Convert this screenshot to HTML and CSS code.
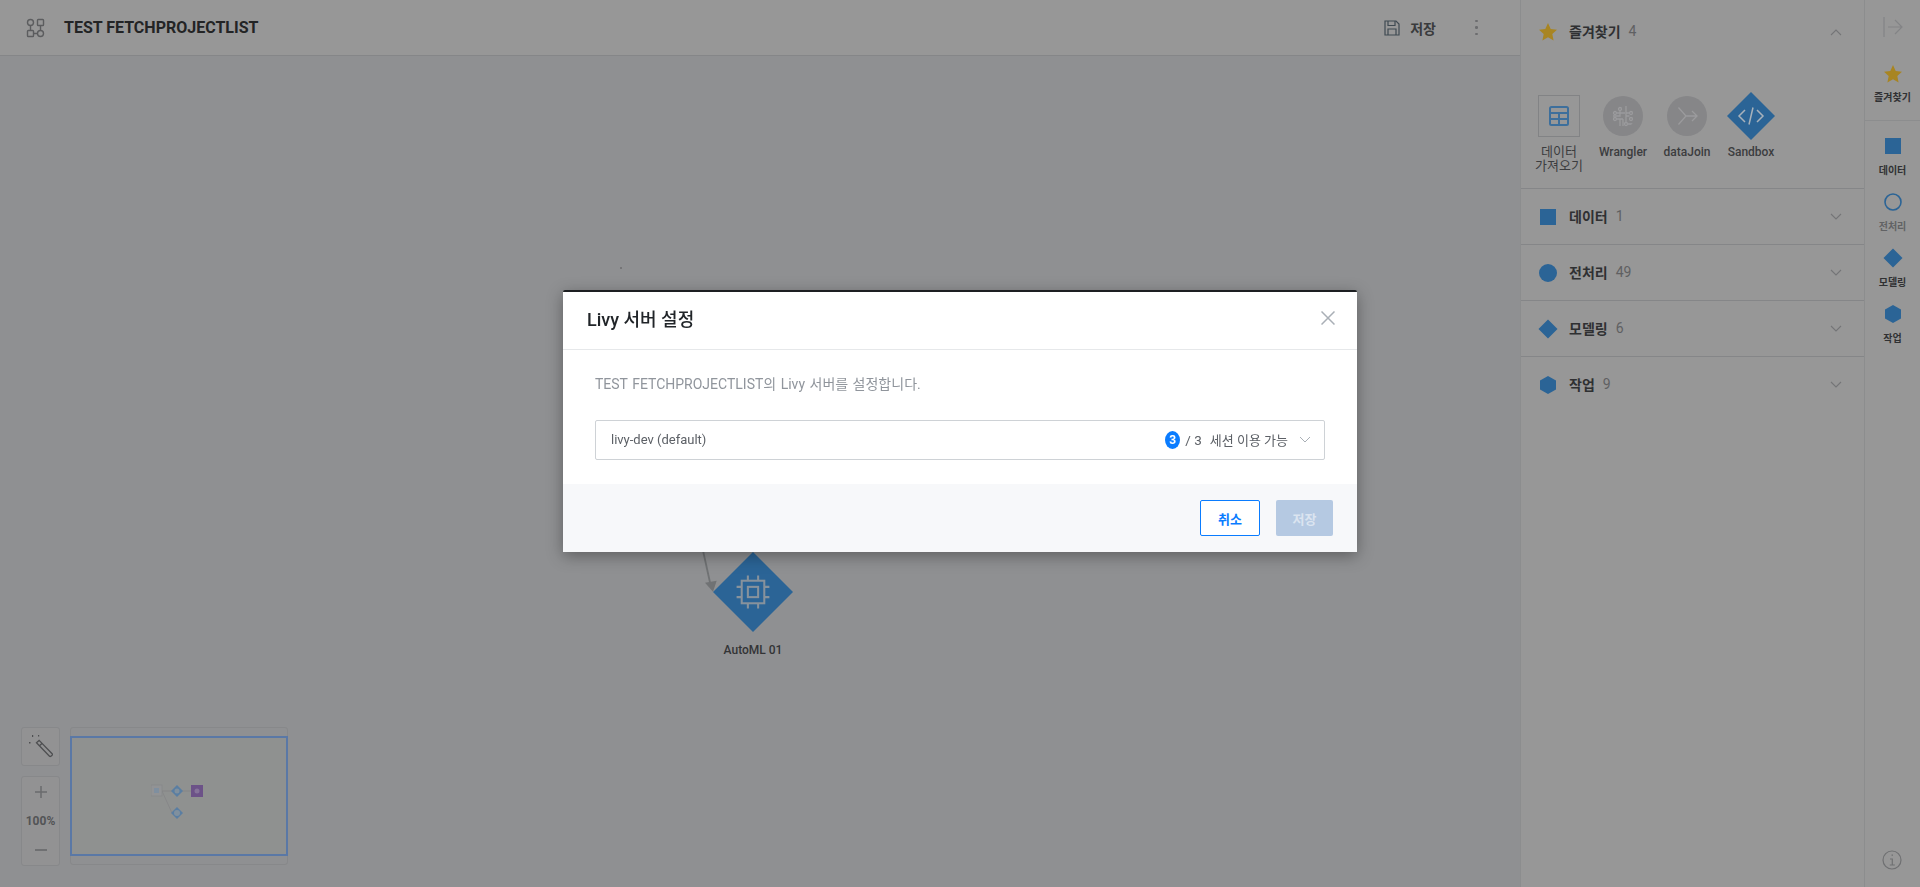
FILE: index.html
```html
<!DOCTYPE html>
<html lang="ko">
<head>
<meta charset="utf-8">
<title>Livy 서버 설정</title>
<link rel="stylesheet" href="styles.css">
</head>
<body>
<div class="app">
  <main class="main">
    <header class="topbar">
      <svg class="flow-icon" viewBox="0 0 20 20" width="20" height="20"><circle cx="4.500" cy="4.500" r="3"/><rect x="11.500" y="1.500" width="6" height="6" rx=".8"/><rect x="1.500" y="12.500" width="6" height="6" rx=".8"/><circle cx="14.500" cy="15.500" r="3"/><path d="M4.500 7.500v5M14.500 7.500v5M7.500 15.500h4"/></svg>
      <h1 class="project-title">TEST FETCHPROJECTLIST</h1>
      <button class="save-link">
        <svg class="save-icon" viewBox="0 0 16 16" width="16" height="16"><path d="M1 1h11l3 3v11H1z"/><path d="M4 1v4.500h7V1M4 15v-6h8v6"/></svg>
        <span>저장</span>
      </button>
      <span class="kebab"><i></i><i></i><i></i></span>
    </header>
    <section class="canvas">
      <span class="stray-dot"></span>
      <svg class="edge" viewBox="0 0 30 70" width="30" height="70"><path d="M2.500 0L15 57"/><path class="edge-head" d="M9 52.700l11.700-2L17 61.700z"/></svg>
      <div class="node">
        <svg viewBox="0 0 78 78" width="80" height="80"><path class="node-shape" d="M39 0l39 39-39 39L0 39z"/><g class="node-glyph"><rect x="28" y="28" width="22" height="22"/><rect x="34" y="34" width="10" height="10"/><path d="M34 28v-5M44 28v-5M34 50v5M44 50v5M28 34h-5M28 44h-5M50 34h5M50 44h5"/></g></svg>
        <span class="node-label">AutoML 01</span>
      </div>
      <div class="canvas-tools">
        <div class="tool-col">
          <button class="tool-btn">
            <svg class="wand" viewBox="0 0 24 24" width="24" height="24"><path d="M7.500 7.800l2.600-2.400 13 13.300c.5.600.4 1 0 1.500l-1.200 1c-.5.400-.9.400-1.400 0zM10.300 11l2.600-2.500"/><path class="spark" d="M3 0h1.200v2H3zM9 0h1.200v1.500H9zM0 7h1.500v1.500H0z"/></svg>
          </button>
          <div class="zoom-box">
            <svg class="zoom-plus" viewBox="0 0 12 12" width="12" height="12"><path d="M6 0v12M0 6h12"/></svg>
            <span class="zoom-val">100%</span>
            <span class="zoom-line"></span>
          </div>
        </div>
        <div class="minimap">
          <div class="mini-frame"></div>
          <svg class="mini-graph" viewBox="0 0 60 40" width="60" height="40"><path class="mini-edge" d="M11 7h30M11 7l10 22"/><rect class="mini-box" x="0" y="1" width="11" height="11"/><rect class="mini-in" x="3" y="4" width="5" height="5"/><path class="mini-d" d="M26 1l6 6-6 6-6-6z"/><circle class="mini-c" cx="26" cy="7" r="2.500"/><rect class="mini-p" x="40" y="1" width="12" height="12"/><circle class="mini-pc" cx="46" cy="7" r="2.500"/><path class="mini-d" d="M26 23l6 6-6 6-6-6z"/><circle class="mini-c" cx="26" cy="29" r="3"/></svg>
        </div>
      </div>
    </section>
  </main>

  <aside class="panel">
    <div class="group group-open">
      <div class="group-head">
        <svg class="g-icon" viewBox="0 0 20 20" width="20" height="20"><path class="star" d="M10 1l2.700 6 6.300.700-4.700 4.300 1.300 6.500L10 15.200l-5.600 3.300 1.300-6.500L1 7.700 7.300 7z"/></svg>
        <span class="g-name">즐겨찾기</span><span class="g-count">4</span>
        <svg class="chev" viewBox="0 0 12 7" width="12" height="7"><path d="M1 6l5-5 5 5"/></svg>
      </div>
      <div class="fav-row">
        <div class="fav">
          <span class="fav-box"><svg class="table-icon" viewBox="0 0 20 20" width="20" height="20"><rect x="1" y="1" width="18" height="18" rx="1.500"/><path d="M1 7h18M1 13h18M10 7v12"/></svg></span>
          <span class="fav-label fav-label-ko">데이터<br>가져오기</span>
        </div>
        <div class="fav">
          <span class="fav-circle"><svg class="ghost" viewBox="0 0 24 24" width="24" height="24"><circle cx="9" cy="5" r="1.500"/><circle cx="4" cy="9" r="1.500"/><circle cx="20" cy="15" r="1.500"/><circle cx="15" cy="20" r="1.500"/><circle cx="20" cy="9" r="1.500"/><circle cx="4" cy="15" r="1.500"/><path d="M9 6.500V12H2M5.500 9H14M15 2v16.500M15 12h3.500M18.500 9H15M5.500 15H12M12 15v7M9 15v7M16.500 20H22"/></svg></span>
          <span class="fav-label">Wrangler</span>
        </div>
        <div class="fav">
          <span class="fav-circle"><svg class="ghost" viewBox="0 0 24 24" width="24" height="24"><path d="M3 3l8 9-8 9M11 12h11M17 7l5 5-5 5"/></svg></span>
          <span class="fav-label">dataJoin</span>
        </div>
        <div class="fav">
          <span class="fav-diamond"><svg viewBox="0 0 48 48" width="48" height="52"><path class="blue" d="M24 0l24 24-24 24L0 24z"/><path class="code" d="M18 18l-6 6 6 6M30 18l6 6-6 6M26 15.500l-4 17"/></svg></span>
          <span class="fav-label">Sandbox</span>
        </div>
      </div>
    </div>
    <div class="group">
      <div class="group-head">
        <span class="g-slot"><svg viewBox="0 0 16 16" width="16" height="16"><rect class="blue" width="16" height="16"/></svg></span>
        <span class="g-name">데이터</span><span class="g-count">1</span>
        <svg class="chev" viewBox="0 0 12 7" width="12" height="7"><path d="M1 1l5 5 5-5"/></svg>
      </div>
    </div>
    <div class="group">
      <div class="group-head">
        <span class="g-slot"><svg viewBox="0 0 18 18" width="18" height="18"><circle class="blue" cx="9" cy="9" r="9"/></svg></span>
        <span class="g-name">전처리</span><span class="g-count">49</span>
        <svg class="chev" viewBox="0 0 12 7" width="12" height="7"><path d="M1 1l5 5 5-5"/></svg>
      </div>
    </div>
    <div class="group">
      <div class="group-head">
        <span class="g-slot"><svg viewBox="0 0 20 20" width="20" height="20"><path class="blue" d="M10 .500L19.500 10 10 19.500.500 10z"/></svg></span>
        <span class="g-name">모델링</span><span class="g-count">6</span>
        <svg class="chev" viewBox="0 0 12 7" width="12" height="7"><path d="M1 1l5 5 5-5"/></svg>
      </div>
    </div>
    <div class="group">
      <div class="group-head">
        <span class="g-slot"><svg viewBox="0 0 16 18" width="16" height="18"><path class="blue" d="M8 0l8 4.500v9L8 18l-8-4.500v-9z"/></svg></span>
        <span class="g-name">작업</span><span class="g-count">9</span>
        <svg class="chev" viewBox="0 0 12 7" width="12" height="7"><path d="M1 1l5 5 5-5"/></svg>
      </div>
    </div>
  </aside>

  <nav class="rail">
    <svg class="collapse" viewBox="0 0 20 20" width="20" height="20"><path d="M1 0v20M5 10h14M12 3l7 7-7 7"/></svg>
    <div class="rail-item rail-fav">
      <svg viewBox="0 0 20 20" width="20" height="20"><path class="star" d="M10 1l2.700 6 6.300.700-4.700 4.300 1.300 6.500L10 15.200l-5.600 3.300 1.300-6.500L1 7.700 7.300 7z"/></svg>
      <span>즐겨찾기</span>
    </div>
    <div class="rail-item">
      <svg viewBox="0 0 16 16" width="16" height="16"><rect class="blue" width="16" height="16"/></svg>
      <span>데이터</span>
    </div>
    <div class="rail-item rail-dim">
      <svg viewBox="0 0 18 18" width="18" height="18"><circle class="ring" cx="9" cy="9" r="8"/></svg>
      <span>전처리</span>
    </div>
    <div class="rail-item">
      <svg viewBox="0 0 20 20" width="20" height="20"><path class="blue" d="M10 .500L19.500 10 10 19.500.500 10z"/></svg>
      <span>모델링</span>
    </div>
    <div class="rail-item">
      <svg viewBox="0 0 16 18" width="16" height="18"><path class="blue" d="M8 0l8 4.500v9L8 18l-8-4.500v-9z"/></svg>
      <span>작업</span>
    </div>
    <svg class="info" viewBox="0 0 20 20" width="20" height="20"><circle cx="10" cy="10" r="9"/><path d="M8 9h2.300v6M7.800 15h5M9.500 5.200h1.500"/></svg>
  </nav>
</div>

<div class="backdrop">
  <div class="modal">
    <div class="modal-head">
      <h2 class="modal-title">Livy 서버 설정</h2>
      <svg class="modal-close" viewBox="0 0 14 14" width="14" height="14"><path d="M.500.500l13 13M13.500.500l-13 13"/></svg>
    </div>
    <div class="modal-body">
      <p class="modal-desc">TEST FETCHPROJECTLIST의 Livy 서버를 설정합니다.</p>
      <div class="select">
        <span class="select-name">livy-dev (default)</span>
        <span class="badge">3</span>
        <span class="select-of">/ 3</span>
        <span class="select-note">세션 이용 가능</span>
        <svg class="select-chev" viewBox="0 0 12 7" width="12" height="7"><path d="M1 1l5 5 5-5"/></svg>
      </div>
    </div>
    <div class="modal-foot">
      <button class="btn btn-outline">취소</button>
      <button class="btn btn-disabled">저장</button>
    </div>
  </div>
</div>
</body>
</html>
```

FILE: styles.css
```css
* { box-sizing: border-box; }
html, body { margin: 0; height: 100%; overflow: hidden; }
body {
  font-family: Roboto, "Noto Sans CJK KR", sans-serif;
  background: #8f9092;
  color: #2a2b2d;
}
button { font: inherit; border: 0; background: none; padding: 0; }
svg { display: block; }
.blue { fill: #2b6496; }
.star { fill: #a88522; }

.app { display: flex; height: 887px; }
.main { width: 1520px; display: flex; flex-direction: column; }

.topbar {
  height: 56px;
  flex: none;
  display: flex;
  align-items: center;
  padding: 0 42px 0 26px;
  background: #979797;
  border-bottom: 1px solid #858688;
}
.flow-icon { fill: none; stroke: #5c5d5f; stroke-width: 1.4; }
.project-title {
  margin: 0 0 0 18px;
  font-size: 16px;
  font-weight: 700;
  color: #232425;
  flex: 1;
}
.save-link {
  display: flex;
  align-items: center;
  gap: 10px;
  font-size: 14px;
  font-weight: 700;
  color: #3a3b3d;
  margin-right: 39px;
}
.save-icon { fill: none; stroke: #3f4a52; stroke-width: 1.2; }
.kebab { display: flex; flex-direction: column; gap: 4px; width: 3px; }
.kebab i { width: 2.500px; height: 2.500px; border-radius: 50%; background: #6c6d6f; }

.canvas { flex: 1; position: relative; background: #8f9092; }
.stray-dot { position: absolute; left: 620px; top: 211px; width: 1.500px; height: 1.500px; background: #707173; border-radius: 50%; }
.edge { position: absolute; left: 696px; top: 474px; fill: none; stroke: #707274; stroke-width: 1.800; }
.edge-head { fill: #707274; stroke: none; }
.node {
  position: absolute;
  left: 713px;
  top: 496px;
  width: 80px;
  display: flex;
  flex-direction: column;
  align-items: center;
}
.node-shape { fill: #2b6496; }
.node-glyph { fill: none; stroke: #87929c; stroke-width: 2; }
.node-label { font-size: 12px; font-weight: 500; color: #333436; margin-top: 11px; white-space: nowrap; line-height: 14px; }

.canvas-tools { position: absolute; left: 21px; bottom: 21px; display: flex; gap: 10px; }
.tool-col { display: flex; flex-direction: column; gap: 10px; width: 39px; }
.tool-btn, .zoom-box {
  border: 1px solid #87888a;
  border-radius: 3px;
  background: #929293;
}
.tool-btn { height: 39px; display: flex; align-items: center; justify-content: center; }
.wand { fill: none; stroke: #4e4f51; stroke-width: 1.300; }
.spark { fill: #4e4f51; stroke: none; }
.zoom-box { height: 90px; display: flex; flex-direction: column; align-items: center; padding-top: 9px; }
.zoom-plus { fill: none; stroke: #6a6b6d; stroke-width: 1.500; }
.zoom-val { margin-top: 16px; font-size: 12px; font-weight: 700; line-height: 14px; color: #535456; }
.zoom-line { margin-top: 21px; width: 12px; height: 1.500px; background: #6f7072; }
.minimap {
  width: 218px;
  height: 138px;
  position: relative;
  border: 1px solid #87888a;
  border-radius: 3px;
  background: #8f9092;
}
.mini-frame { position: absolute; left: -1px; right: -1px; top: 8px; bottom: 8px; border: 2px solid #5a78a6; background: #8f9190; }
.mini-graph { position: absolute; left: 80px; top: 56px; }
.mini-edge { fill: none; stroke: #828385; stroke-width: .7; }
.mini-box { fill: #929395; stroke: #848587; stroke-width: .6; }
.mini-in { fill: #7f8f9f; }
.mini-d { fill: #5a7ea2; }
.mini-c { fill: #80909e; }
.mini-p { fill: #6c5288; }
.mini-pc { fill: #85739a; }

.panel {
  width: 345px;
  flex: none;
  background: #979797;
  border-left: 1px solid #8c8d8e;
  border-right: 1px solid #8c8d8e;
}
.group { border-bottom: 1px solid #858688; }
.group:last-child { border-bottom: 0; }
.group-head { height: 55px; display: flex; align-items: center; padding: 0 22px 0 17px; }
.group-open { height: 189px; }
.group-open .group-head { height: 64px; }
.g-name, .g-count { position: relative; top: -1px; }
.g-slot { width: 20px; display: flex; justify-content: center; }
.g-name { margin-left: 11px; font-size: 14px; font-weight: 700; color: #2f3032; }
.g-count { margin-left: 8px; font-size: 14px; color: #5f6062; flex: 1; }
.chev { fill: none; stroke: #747577; stroke-width: 1.100; }
.fav-row { display: flex; padding: 27px 0 0 6px; margin-top: -1px; }
.fav { width: 64px; display: flex; flex-direction: column; align-items: center; }
.fav-box, .fav-circle, .fav-diamond { height: 52px; display: flex; align-items: center; justify-content: center; }
.fav-box { width: 42px; height: 42px; margin: 5px 0; border: 1px solid #828385; }
.fav-circle svg { box-sizing: content-box; padding: 8px; border-radius: 50%; background: #868688; }
.table-icon { fill: none; stroke: #3d6f9c; stroke-width: 2; }
.ghost { fill: none; stroke: #9b9b9d; stroke-width: 1.300; }
.code { fill: none; stroke: #a8b2bb; stroke-width: 1.500; }
.fav-label { margin-top: 3px; font-size: 12px; line-height: 15px; font-weight: 500; color: #3c3d3f; text-align: center; white-space: nowrap; }
.fav-label-ko { font-size: 13px; line-height: 14px; font-weight: 400; }

.rail {
  flex: 1;
  position: relative;
  background: #979797;
  display: flex;
  flex-direction: column;
  align-items: center;
  padding-top: 17px;
}
.collapse { fill: none; stroke: #838486; stroke-width: 1.200; margin-bottom: 27px; flex: none; }
.rail-item { display: flex; flex-direction: column; align-items: center; height: 56px; width: 100%; flex: none; }
.rail-item svg { height: 20px; }
.rail-item span { margin-top: 8px; font-size: 10px; line-height: 14px; font-weight: 700; color: #303133; }
.rail-dim span { color: #616264; }
.ring { fill: none; stroke: #2b6496; stroke-width: 1.600; }
.rail-fav { height: 57px; border-bottom: 1px solid #8c8d8e; margin-bottom: 15px; }
.rail-fav span { margin-top: 7px; }
.info { position: absolute; left: 17px; bottom: 17px; fill: none; stroke: #6f7072; stroke-width: 1.200; }

.backdrop {
  position: fixed;
  inset: 0;
  display: flex;
  justify-content: center;
  align-items: flex-start;
  padding-top: 290px;
}
.modal {
  width: 794px;
  height: 262px;
  display: flex;
  flex-direction: column;
  background: #fff;
  border-top: 2px solid #1d1f22;
  border-radius: 2px 2px 0 0;
  box-shadow: 0 4px 16px rgba(0, 0, 0, .35);
}
.modal-head {
  height: 58px;
  flex: none;
  display: flex;
  align-items: center;
  justify-content: space-between;
  padding: 0 22px 5px 24px;
  border-bottom: 1px solid #e6e8ea;
}
.modal-title { margin: 0; font-size: 18px; font-weight: 500; color: #212529; }
.modal-close { fill: none; stroke: #a9afb6; stroke-width: 1.500; }
.modal-body { flex: 1; padding: 25px 32px 0; }
.modal-desc { margin: 0 0 27px; font-size: 14px; line-height: 18px; color: #90959c; word-spacing: 1px; }
.select {
  height: 40px;
  display: flex;
  align-items: center;
  padding: 0 13px 1px 15px;
  border: 1px solid #ced2d6;
  border-radius: 2px;
  font-size: 13px;
  color: #5c6066;
}
.select-name { flex: 1; }
.badge {
  width: 15px;
  height: 18px;
  border-radius: 50%;
  background: #0a7cff;
  color: #fff;
  font-size: 12px;
  font-weight: 700;
  line-height: 18px;
  text-align: center;
}
.select-of { margin-left: 5px; font-size: 13.500px; }
.select-note { margin-left: 8px; }
.select-chev { margin-left: 11px; fill: none; stroke: #a9afb6; stroke-width: 1; }
.modal-foot {
  height: 68px;
  flex: none;
  display: flex;
  align-items: center;
  justify-content: flex-end;
  gap: 16px;
  padding: 0 24px;
  background: #f7f8fa;
}
.btn { height: 36px; border-radius: 2px; font-size: 13px; font-weight: 700; text-align: center; }
.btn-outline { width: 60px; border: 1px solid #0a7cff; background: #fff; color: #0a7cff; }
.btn-disabled { width: 57px; background: #b5c9e2; color: #dbe4f0; }
```
